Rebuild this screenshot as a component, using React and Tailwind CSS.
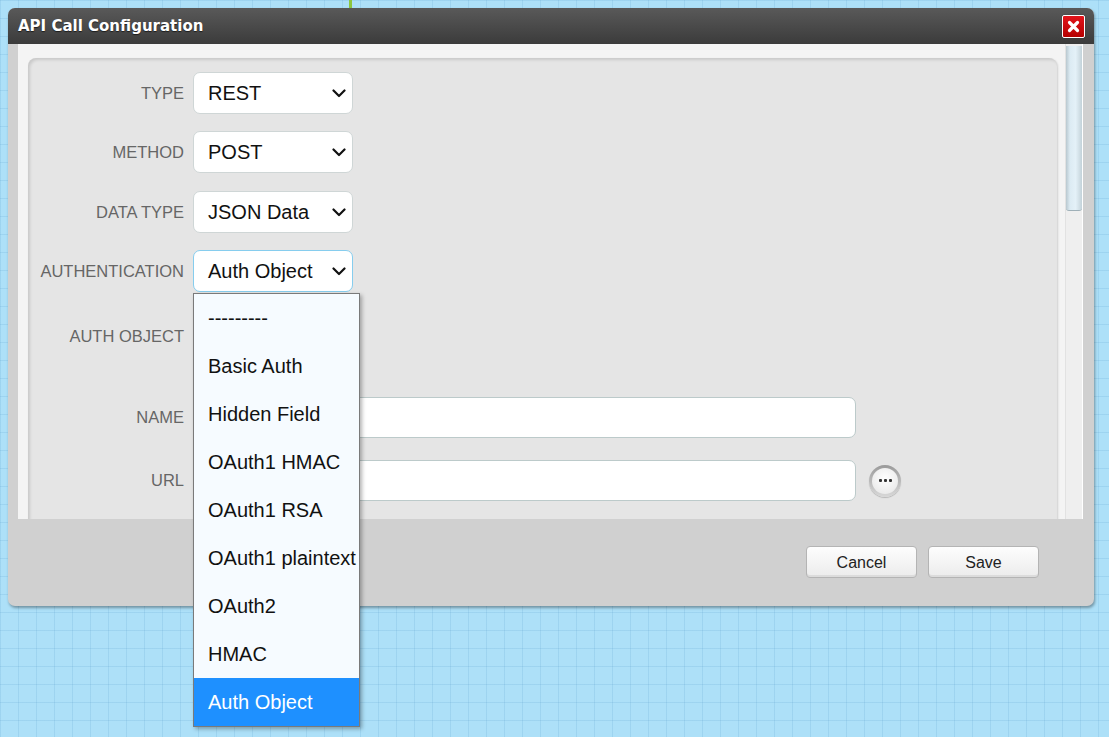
import React from "react";

const authOptions = [
  "---------",
  "Basic Auth",
  "Hidden Field",
  "OAuth1 HMAC",
  "OAuth1 RSA",
  "OAuth1 plaintext",
  "OAuth2",
  "HMAC",
  "Auth Object",
];

function Chevron() {
  return (
    <svg width="14" height="9" viewBox="0 0 14 9" className="shrink-0">
      <path d="M1.5 1.5 L7 7 L12.5 1.5" fill="none" stroke="#111" strokeWidth="2.2" strokeLinecap="round" strokeLinejoin="round" />
    </svg>
  );
}

function FakeSelect({ value, focused }) {
  return (
    <div
      className={
        "w-[160px] h-[42px] rounded-[7px] bg-white flex items-center justify-between pl-[14px] pr-[6px] text-[20px] text-[#111] border " +
        (focused ? "border-[#86cdee] bg-[#f8fcff]" : "border-[#cfd6d6]")
      }
    >
      <span>{value}</span>
      <Chevron />
    </div>
  );
}

function Row({ label, children, className = "" }) {
  return (
    <div className={"flex items-center " + className}>
      <div className="w-[156px] text-right text-[16.5px] text-[#666] uppercase">{label}</div>
      <div className="ml-[9px] flex items-center">{children}</div>
    </div>
  );
}

function DialogButton({ children }) {
  return (
    <button className="w-[111px] h-[32px] rounded-[4px] border border-[#b4b4b4] bg-[linear-gradient(#fdfdfd,#ececec)] shadow-[inset_0_-2px_0_#dcdcdc] text-[16px] text-[#222] pt-[1px]">
      {children}
    </button>
  );
}

export default function App() {
  return (
    <div
      className="relative w-[1109px] h-[737px] overflow-hidden bg-[#ade0f8] bg-[linear-gradient(rgba(110,175,215,0.25)_1px,transparent_1px),linear-gradient(90deg,rgba(110,175,215,0.25)_1px,transparent_1px)] bg-[size:18px_18px] pt-[8px] pl-[8px]"
      style={{ fontFamily: '"Liberation Sans", Arial, sans-serif' }}
    >
      <div className="absolute left-[349px] top-0 w-[3px] h-[8px] bg-[#8cc63f]" />

      {/* Dialog */}
      <div className="w-[1086px] h-[598px] rounded-[7px] bg-[#d0d0d0] shadow-[1px_2px_3px_rgba(0,0,0,0.35)] flex flex-col overflow-hidden">
        <div className="h-[36px] shrink-0 bg-[linear-gradient(#595959,#3b3b3b)] flex items-center justify-between pl-[10px] pr-[9px]">
          <span className="text-white font-bold text-[15px] font-['DejaVu_Sans',sans-serif] [text-shadow:0_1px_1px_rgba(0,0,0,0.6)]">API Call Configuration</span>
          <div className="w-[23px] h-[23px] bg-[linear-gradient(#e3141b,#b50000)] border border-white rounded-[2px] flex items-center justify-center shadow-[0_0_1px_rgba(0,0,0,0.5)]">
            <svg width="13" height="13" viewBox="0 0 13 13">
              <path d="M2.5 2.5 L10.5 10.5 M10.5 2.5 L2.5 10.5" stroke="white" strokeWidth="3.2" strokeLinecap="round" />
            </svg>
          </div>
        </div>

        <div className="flex pl-[10px] pr-[11px] h-[475px] shrink-0">
          <div className="flex-1 bg-[#f4f4f4] flex overflow-hidden">
            <div className="flex-1 pl-[10px] pr-[8px] pt-[14px] overflow-hidden">
              <div className="h-[520px] rounded-[8px] bg-[#e5e5e5] shadow-[inset_2px_2px_3px_rgba(0,0,0,0.12),1px_1px_2px_rgba(0,0,0,0.15)] pt-[14px] flex flex-col">
                <Row label="Type">
                  <FakeSelect value="REST" />
                </Row>
                <Row label="Method" className="mt-[17px]">
                  <FakeSelect value="POST" />
                </Row>
                <Row label="Data Type" className="mt-[18px]">
                  <FakeSelect value="JSON Data" />
                </Row>
                <Row label="Authentication" className="mt-[17px]">
                  <FakeSelect value="Auth Object" focused />
                </Row>
                <Row label="Auth Object" className="mt-[23px]">
                  <FakeSelect value="" />
                </Row>
                <Row label="Name" className="mt-[40px]">
                  <div className="w-[663px] h-[41px] rounded-[7px] bg-white border border-[#bccaca]" />
                </Row>
                <Row label="URL" className="mt-[22px]">
                  <div className="w-[663px] h-[41px] rounded-[7px] bg-white border border-[#bccaca]" />
                  <div className="ml-[13px] w-[32px] h-[32px] rounded-full bg-[linear-gradient(#9a9a9a,#d8d8d8)] p-[3px] shadow-[0_1px_1px_rgba(0,0,0,0.2)]">
                    <div className="w-full h-full rounded-full bg-[radial-gradient(circle_at_50%_40%,#ffffff,#e4e4e4)] flex items-center justify-center gap-[2px]">
                      <span className="w-[3px] h-[3px] bg-[#333] rounded-[1px]" />
                      <span className="w-[3px] h-[3px] bg-[#333] rounded-[1px]" />
                      <span className="w-[3px] h-[3px] bg-[#333] rounded-[1px]" />
                    </div>
                  </div>
                </Row>
              </div>
            </div>
            {/* scrollbar */}
            <div className="w-[18px] bg-[#efefef] border-l border-[#e2e2e2] border-r border-r-white flex flex-col pt-[2px]">
              <div className="h-[165px] rounded-b-[3px] bg-[linear-gradient(90deg,#b9c8cf,#dcebf3_25%,#e4f1f8_60%,#c3d2d9)] border-b border-[#9fb0b8]" />
            </div>
          </div>
        </div>

        <div className="flex-1 flex justify-end items-start pt-[27px] pr-[55px] gap-[11px]">
          <DialogButton>Cancel</DialogButton>
          <DialogButton>Save</DialogButton>
        </div>
      </div>

      {/* open dropdown list */}
      <div className="absolute left-[193px] top-[293px] w-[167px] border border-[#7a7a7a] bg-[#f6fbff] shadow-[2px_2px_4px_rgba(0,0,0,0.3)]">
        {authOptions.map((opt) => (
          <div
            key={opt}
            className={
              "h-[48px] flex items-center pl-[14px] text-[20px] whitespace-nowrap " +
              (opt === "Auth Object" ? "bg-[#1e90ff] text-white" : "text-[#111]")
            }
          >
            {opt}
          </div>
        ))}
      </div>
    </div>
  );
}
